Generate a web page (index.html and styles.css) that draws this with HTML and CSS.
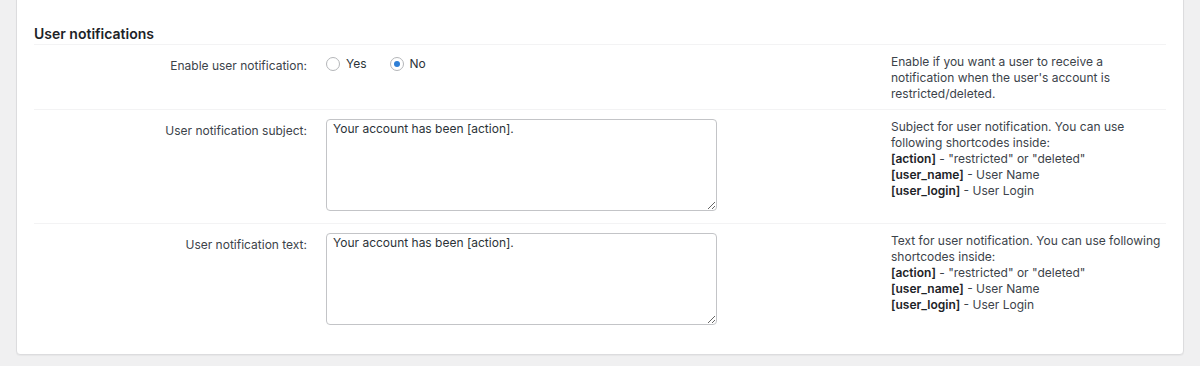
FILE: index.html
```html
<!DOCTYPE html>
<html lang="en">
  <head>
    <meta charset="UTF-8" />
    <title>User notifications</title>
    <link rel="stylesheet" href="styles.css">
  </head>
  <body>
    <div class="page">
      <div class="card">
        <h2 class="section-title">User notifications</h2>

        <div class="form-row">
          <div class="label">Enable user notification:</div>
          <div class="field radios">
            <label class="radio"><input type="radio" name="notify" value="yes" /> Yes</label>
            <label class="radio"><input type="radio" name="notify" value="no" checked /> No</label>
          </div>
          <div class="desc">
            Enable if you want a user to receive a notification when the user's account is restricted/deleted.
          </div>
        </div>

        <div class="form-row">
          <div class="label">User notification subject:</div>
          <div class="field">
            <textarea>Your account has been [action].</textarea>
          </div>
          <div class="desc">
            Subject for user notification. You can use following shortcodes inside:<br>
            <b>[action]</b> - "restricted" or "deleted"<br>
            <b>[user_name]</b> - User Name<br>
            <b>[user_login]</b> - User Login
          </div>
        </div>

        <div class="form-row">
          <div class="label">User notification text:</div>
          <div class="field">
            <textarea>Your account has been [action].</textarea>
          </div>
          <div class="desc">
            Text for user notification. You can use following shortcodes inside:<br>
            <b>[action]</b> - "restricted" or "deleted"<br>
            <b>[user_name]</b> - User Name<br>
            <b>[user_login]</b> - User Login
          </div>
        </div>
      </div>
    </div>
  </body>
</html>
```

FILE: styles.css
```css
body {
  font-family: Inter, "Liberation Sans", sans-serif;
  font-size: 12px;
  line-height: 16px;
  color: #3c434a;
  background: #f0f0f1;
  margin: 0;
  padding: 0;
}

.page {
  padding: 0 16px 11px 16px;
}

.card {
  margin-top: -8px;
  padding: 31px 17px 17px 17px;
  background: white;
  border: 1px solid #dcdcde;
  border-radius: 4px;
  box-shadow: 0 1px 1px rgba(0, 0, 0, 0.04);
}

.section-title {
  margin: 0;
  font-size: 14px;
  line-height: 20px;
  font-weight: 600;
  color: #1d2327;
}

.form-row {
  display: grid;
  grid-template-columns: 292px 565px 1fr;
  padding: 9px 0 7px 0;
  border-top: 1px solid #f3f3f4;
}

.label {
  text-align: right;
  padding: 4px 19px 0 0;
}

.radios {
  display: flex;
  gap: 23px;
  align-items: flex-start;
  padding-top: 2px;
}

.radio {
  display: flex;
  align-items: center;
  gap: 6px;
  color: #2c3338;
}

.radio input {
  appearance: none;
  width: 14px;
  height: 14px;
  margin: 0;
  border: 1px solid #b4b6b9;
  border-radius: 50%;
  background: white;
  display: grid;
  place-items: center;
}

.radio input:checked::before {
  content: "";
  width: 6px;
  height: 6px;
  border-radius: 50%;
  background: #2f7fd6;
}

.field textarea {
  display: block;
  width: 391px;
  height: 92px;
  box-sizing: border-box;
  margin: 0 0 5px 0;
  padding: 1px 6px;
  font-family: Inter, "Liberation Sans", sans-serif;
  font-size: 12px;
  line-height: 16px;
  color: #2c3338;
  border: 1px solid #c3c4c7;
  border-radius: 4px;
  resize: vertical;
}

.desc b {
  font-weight: 600;
  color: #1d2327;
}
```
